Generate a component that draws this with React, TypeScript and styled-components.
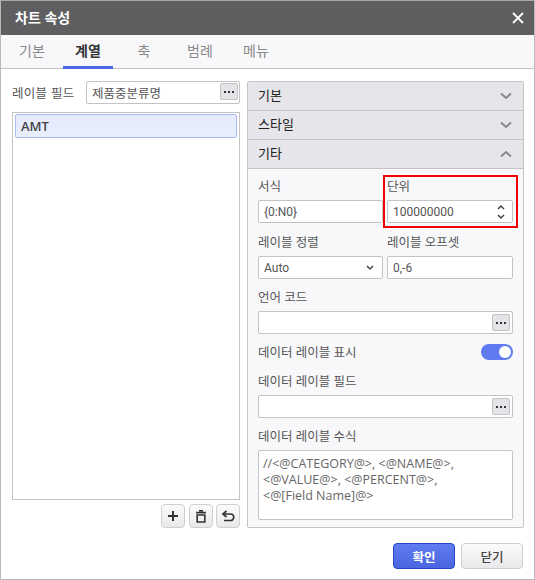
import React from 'react';
import styled, { createGlobalStyle } from 'styled-components';

const GlobalStyle = createGlobalStyle`
  html, body { margin: 0; padding: 0; background: #fff; }
  body {
    font-family: "Open Sans", "Noto Sans CJK KR", sans-serif;
    font-size: 12px;
    color: #444;
  }
  * { box-sizing: border-box; }
`;

const Page = styled.div`
  position: relative;
  width: 535px;
  height: 580px;
`;

const Dialog = styled.div`
  width: 535px;
  height: 580px;
  border: 1px solid #b9b9bb;
  border-top-color: #a8a8a8;
  display: flex;
  flex-direction: column;
  background: #fff;
`;

const TitleBar = styled.div`
  height: 34px;
  flex: none;
  background: #5f5f61;
  color: #fff;
  display: flex;
  align-items: center;
  justify-content: space-between;
  padding: 0 10px 0 14px;
  font-size: 14px;
  font-weight: 700;
`;

const TitleText = styled.span`
  margin-top: -2px;
`;

const Tabs = styled.div`
  height: 34px;
  flex: none;
  background: #f8f8fb;
  border-bottom: 1px solid #c4c4c6;
  display: flex;
`;

const Tab = styled.div<{ $active?: boolean }>`
  width: 50px;
  margin-right: 6px;
  margin-bottom: -1px;
  text-align: center;
  padding-top: 5px;
  font-size: 14px;
  color: ${p => (p.$active ? '#333' : '#888')};
  font-weight: ${p => (p.$active ? 700 : 400)};
  border-bottom: 3px solid ${p => (p.$active ? '#4a69e2' : 'transparent')};
  &:first-child { margin-left: 6px; }
`;

const Body = styled.div`
  flex: 1;
  display: flex;
  gap: 7px;
  padding: 12px 10px 0 11px;
`;

const LeftColumn = styled.div`
  width: 228px;
  display: flex;
  flex-direction: column;
`;

const LabelRow = styled.div`
  display: flex;
  align-items: center;
  justify-content: space-between;
  height: 23px;
  margin-bottom: 8px;
  font-size: 12.5px;
  letter-spacing: 0.3px;
  color: #555;
`;

const FieldBox = styled.div<{ $width?: number; $latin?: boolean }>`
  position: relative;
  height: 23px;
  width: ${p => (p.$width ? `${p.$width}px` : '100%')};
  background: #fff;
  border: 1px solid #c4c4c6;
  border-radius: 2px;
  display: flex;
  align-items: center;
  padding: 0 5px;
  letter-spacing: 0;
  font-family: ${p => (p.$latin ? 'Roboto, "Noto Sans CJK KR", sans-serif' : 'inherit')};
  font-size: ${p => (p.$latin ? 12 : 12.5)}px;
  color: #555;
`;

const SelectBox = styled(FieldBox)`
  justify-content: space-between;
  padding-right: 8px;
`;

const MoreButton = styled.div<{ $tight?: boolean }>`
  position: absolute;
  right: ${p => (p.$tight ? 1 : 2)}px;
  top: ${p => (p.$tight ? 1 : 2)}px;
  width: 18px;
  height: 17px;
  background: #e3e3e8;
  border: 1px solid #c4c4c6;
  border-radius: 2px;
  display: flex;
  align-items: center;
  justify-content: center;
  gap: 2px;
`;

const Dot = styled.span`
  width: 2px;
  height: 2px;
  background: #333;
`;

const ListBox = styled.div`
  height: 388px;
  border: 1px solid #c4c4c6;
  padding: 1px 2px;
`;

const ListItem = styled.div`
  height: 24px;
  background: linear-gradient(#e4eafc, #eaeffd);
  border: 1px solid #a9baf0;
  border-radius: 2px;
  padding: 0 5px;
  display: flex;
  align-items: center;
  font-size: 13px;
  font-weight: 600;
  color: #444;
`;

const ToolRow = styled.div`
  display: flex;
  justify-content: flex-end;
  gap: 3.5px;
  margin-top: 4px;
`;

const ToolButton = styled.div`
  width: 24px;
  height: 24px;
  background: linear-gradient(#fbfbfc, #e9e9ec);
  border: 1px solid #cfcfd2;
  border-radius: 4px;
  display: flex;
  align-items: center;
  justify-content: center;
`;

const RightColumn = styled.div`
  flex: 1;
  height: 447px;
  border: 1px solid #c4c4c6;
  border-radius: 2px;
  display: flex;
  flex-direction: column;
  background: #f8f8fb;
`;

const SectionHeader = styled.div`
  height: 29px;
  flex: none;
  background: #e5e5ea;
  border-bottom: 1px solid #c4c4c6;
  display: flex;
  align-items: center;
  justify-content: space-between;
  padding: 0 11px 0 10px;
  font-size: 13px;
  color: #222;
`;

const SectionTitle = styled.span`
  margin-top: -3px;
`;

const Form = styled.div`
  padding: 8px 10px 0;
  display: grid;
  grid-template-columns: 125px 126px;
  column-gap: 4px;
  align-content: start;
`;

const Field = styled.div<{ $wide?: boolean; $roomy?: boolean }>`
  grid-column: ${p => (p.$wide ? '1 / 3' : 'auto')};
  display: flex;
  flex-direction: column;
  margin-bottom: ${p => (p.$roomy ? 10 : 9)}px;
`;

const FieldLabel = styled.div`
  height: 23px;
  line-height: 20px;
  font-size: 12.5px;
  color: #555;
`;

const Spin = styled.div`
  position: absolute;
  right: 7px;
  top: 3px;
  display: flex;
  flex-direction: column;
  gap: 4px;
`;

const ToggleRow = styled.div`
  grid-column: 1 / 3;
  display: flex;
  align-items: center;
  justify-content: space-between;
  height: 18px;
  margin-bottom: 11px;
  font-size: 12.5px;
  color: #555;
`;

const ToggleText = styled.span`
  margin-top: -2px;
`;

const Toggle = styled.div`
  width: 32px;
  height: 16px;
  border-radius: 8px;
  background: #5f7bef;
  display: flex;
  align-items: center;
  justify-content: flex-end;
  padding-right: 2px;
`;

const Knob = styled.span`
  width: 12px;
  height: 12px;
  border-radius: 50%;
  background: #fff;
`;

const TextArea = styled.div`
  height: 70px;
  background: #fff;
  border: 1px solid #c4c4c6;
  border-radius: 2px;
  padding: 5px 4px;
  font-size: 12.5px;
  line-height: 16px;
  color: #666;
`;

const Highlight = styled.div`
  position: absolute;
  left: 383px;
  top: 175px;
  width: 135px;
  height: 53px;
  border: 2px solid #f00000;
  pointer-events: none;
`;

const Footer = styled.div`
  flex: none;
  display: flex;
  justify-content: flex-end;
  gap: 6px;
  padding: 0 11px 10px 0;
`;

const Button = styled.div<{ $primary?: boolean }>`
  width: 62px;
  height: 26px;
  border-radius: 4px;
  display: flex;
  align-items: center;
  justify-content: center;
  font-size: 12.5px;
  font-weight: ${p => (p.$primary ? 700 : 500)};
  color: ${p => (p.$primary ? '#fff' : '#444')};
  background: ${p => (p.$primary ? 'linear-gradient(#5f7cf0, #4a66e0)' : 'linear-gradient(#fbfbfc, #e9e9ec)')};
  border: 1px solid ${p => (p.$primary ? '#2a46c4' : '#cfcfd2')};
`;

const Chevron = ({ up }: { up?: boolean }) => (
  <svg width="12" height="8" viewBox="0 0 12 8">
    <path d={up ? 'M1 6.5 6 2l5 4.5' : 'M1 1.5 6 6l5-4.5'} fill="none" stroke="#8a8a8a" strokeWidth="2" />
  </svg>
);

const SmallArrow = ({ up }: { up?: boolean }) => (
  <svg width="8" height="6" viewBox="0 0 8 6">
    <path d={up ? 'M1 5l3-3 3 3' : 'M1 1l3 3 3-3'} fill="none" stroke="#444" strokeWidth="1.5" />
  </svg>
);

const More = ({ tight }: { tight?: boolean }) => (
  <MoreButton $tight={tight}>
    <Dot />
    <Dot />
    <Dot />
  </MoreButton>
);

export default function App() {
  return (
    <Page>
      <GlobalStyle />
      <Dialog>
        <TitleBar>
          <TitleText>차트 속성</TitleText>
          <svg width="12" height="12" viewBox="0 0 12 12">
            <path d="M1 1l10 10M11 1 1 11" stroke="#fff" strokeWidth="1.8" />
          </svg>
        </TitleBar>
        <Tabs>
          <Tab>기본</Tab>
          <Tab $active>계열</Tab>
          <Tab>축</Tab>
          <Tab>범례</Tab>
          <Tab>메뉴</Tab>
        </Tabs>
        <Body>
          <LeftColumn>
            <LabelRow>
              레이블 필드
              <FieldBox $width={154}>
                제품중분류명
                <More tight />
              </FieldBox>
            </LabelRow>
            <ListBox>
              <ListItem>AMT</ListItem>
            </ListBox>
            <ToolRow>
              <ToolButton>
                <svg width="12" height="12" viewBox="0 0 12 12">
                  <path d="M6 1v10M1 6h10" stroke="#333" strokeWidth="2" />
                </svg>
              </ToolButton>
              <ToolButton>
                <svg width="10" height="13" viewBox="0 0 10 13">
                  <path d="M0 2.6h10M3 .8h4" stroke="#333" strokeWidth="1.6" />
                  <path d="M1.2 5h7.6v7H1.2z" fill="none" stroke="#333" strokeWidth="1.6" />
                </svg>
              </ToolButton>
              <ToolButton>
                <svg width="14" height="12" viewBox="0 0 14 12">
                  <path d="M3 4h6.5a3 3 0 0 1 0 6.5H3" fill="none" stroke="#333" strokeWidth="1.7" />
                  <path d="M5.5 1 2 4l3.5 3" fill="none" stroke="#333" strokeWidth="1.7" />
                </svg>
              </ToolButton>
            </ToolRow>
          </LeftColumn>
          <RightColumn>
            <SectionHeader>
              <SectionTitle>기본</SectionTitle>
              <Chevron />
            </SectionHeader>
            <SectionHeader>
              <SectionTitle>스타일</SectionTitle>
              <Chevron />
            </SectionHeader>
            <SectionHeader>
              <SectionTitle>기타</SectionTitle>
              <Chevron up />
            </SectionHeader>
            <Form>
              <Field $roomy>
                <FieldLabel>서식</FieldLabel>
                <FieldBox $latin>{'{0:N0}'}</FieldBox>
              </Field>
              <Field $roomy>
                <FieldLabel>단위</FieldLabel>
                <FieldBox $latin>
                  100000000
                  <Spin>
                    <SmallArrow up />
                    <SmallArrow />
                  </Spin>
                </FieldBox>
              </Field>
              <Field>
                <FieldLabel>레이블 정렬</FieldLabel>
                <SelectBox $latin>
                  Auto
                  <SmallArrow />
                </SelectBox>
              </Field>
              <Field>
                <FieldLabel>레이블 오프셋</FieldLabel>
                <FieldBox $latin>0,-6</FieldBox>
              </Field>
              <Field $wide>
                <FieldLabel>언어 코드</FieldLabel>
                <FieldBox>
                  <More />
                </FieldBox>
              </Field>
              <ToggleRow>
                <ToggleText>데이터 레이블 표시</ToggleText>
                <Toggle>
                  <Knob />
                </Toggle>
              </ToggleRow>
              <Field $wide>
                <FieldLabel>데이터 레이블 필드</FieldLabel>
                <FieldBox>
                  <More />
                </FieldBox>
              </Field>
              <Field $wide>
                <FieldLabel>데이터 레이블 수식</FieldLabel>
                <TextArea>
                  {'//<@CATEGORY@>, <@NAME@>,'}
                  <br />
                  {'<@VALUE@>, <@PERCENT@>,'}
                  <br />
                  {'<@[Field Name]@>'}
                </TextArea>
              </Field>
            </Form>
          </RightColumn>
        </Body>
        <Footer>
          <Button $primary>확인</Button>
          <Button>닫기</Button>
        </Footer>
      </Dialog>
      <Highlight />
    </Page>
  );
}
